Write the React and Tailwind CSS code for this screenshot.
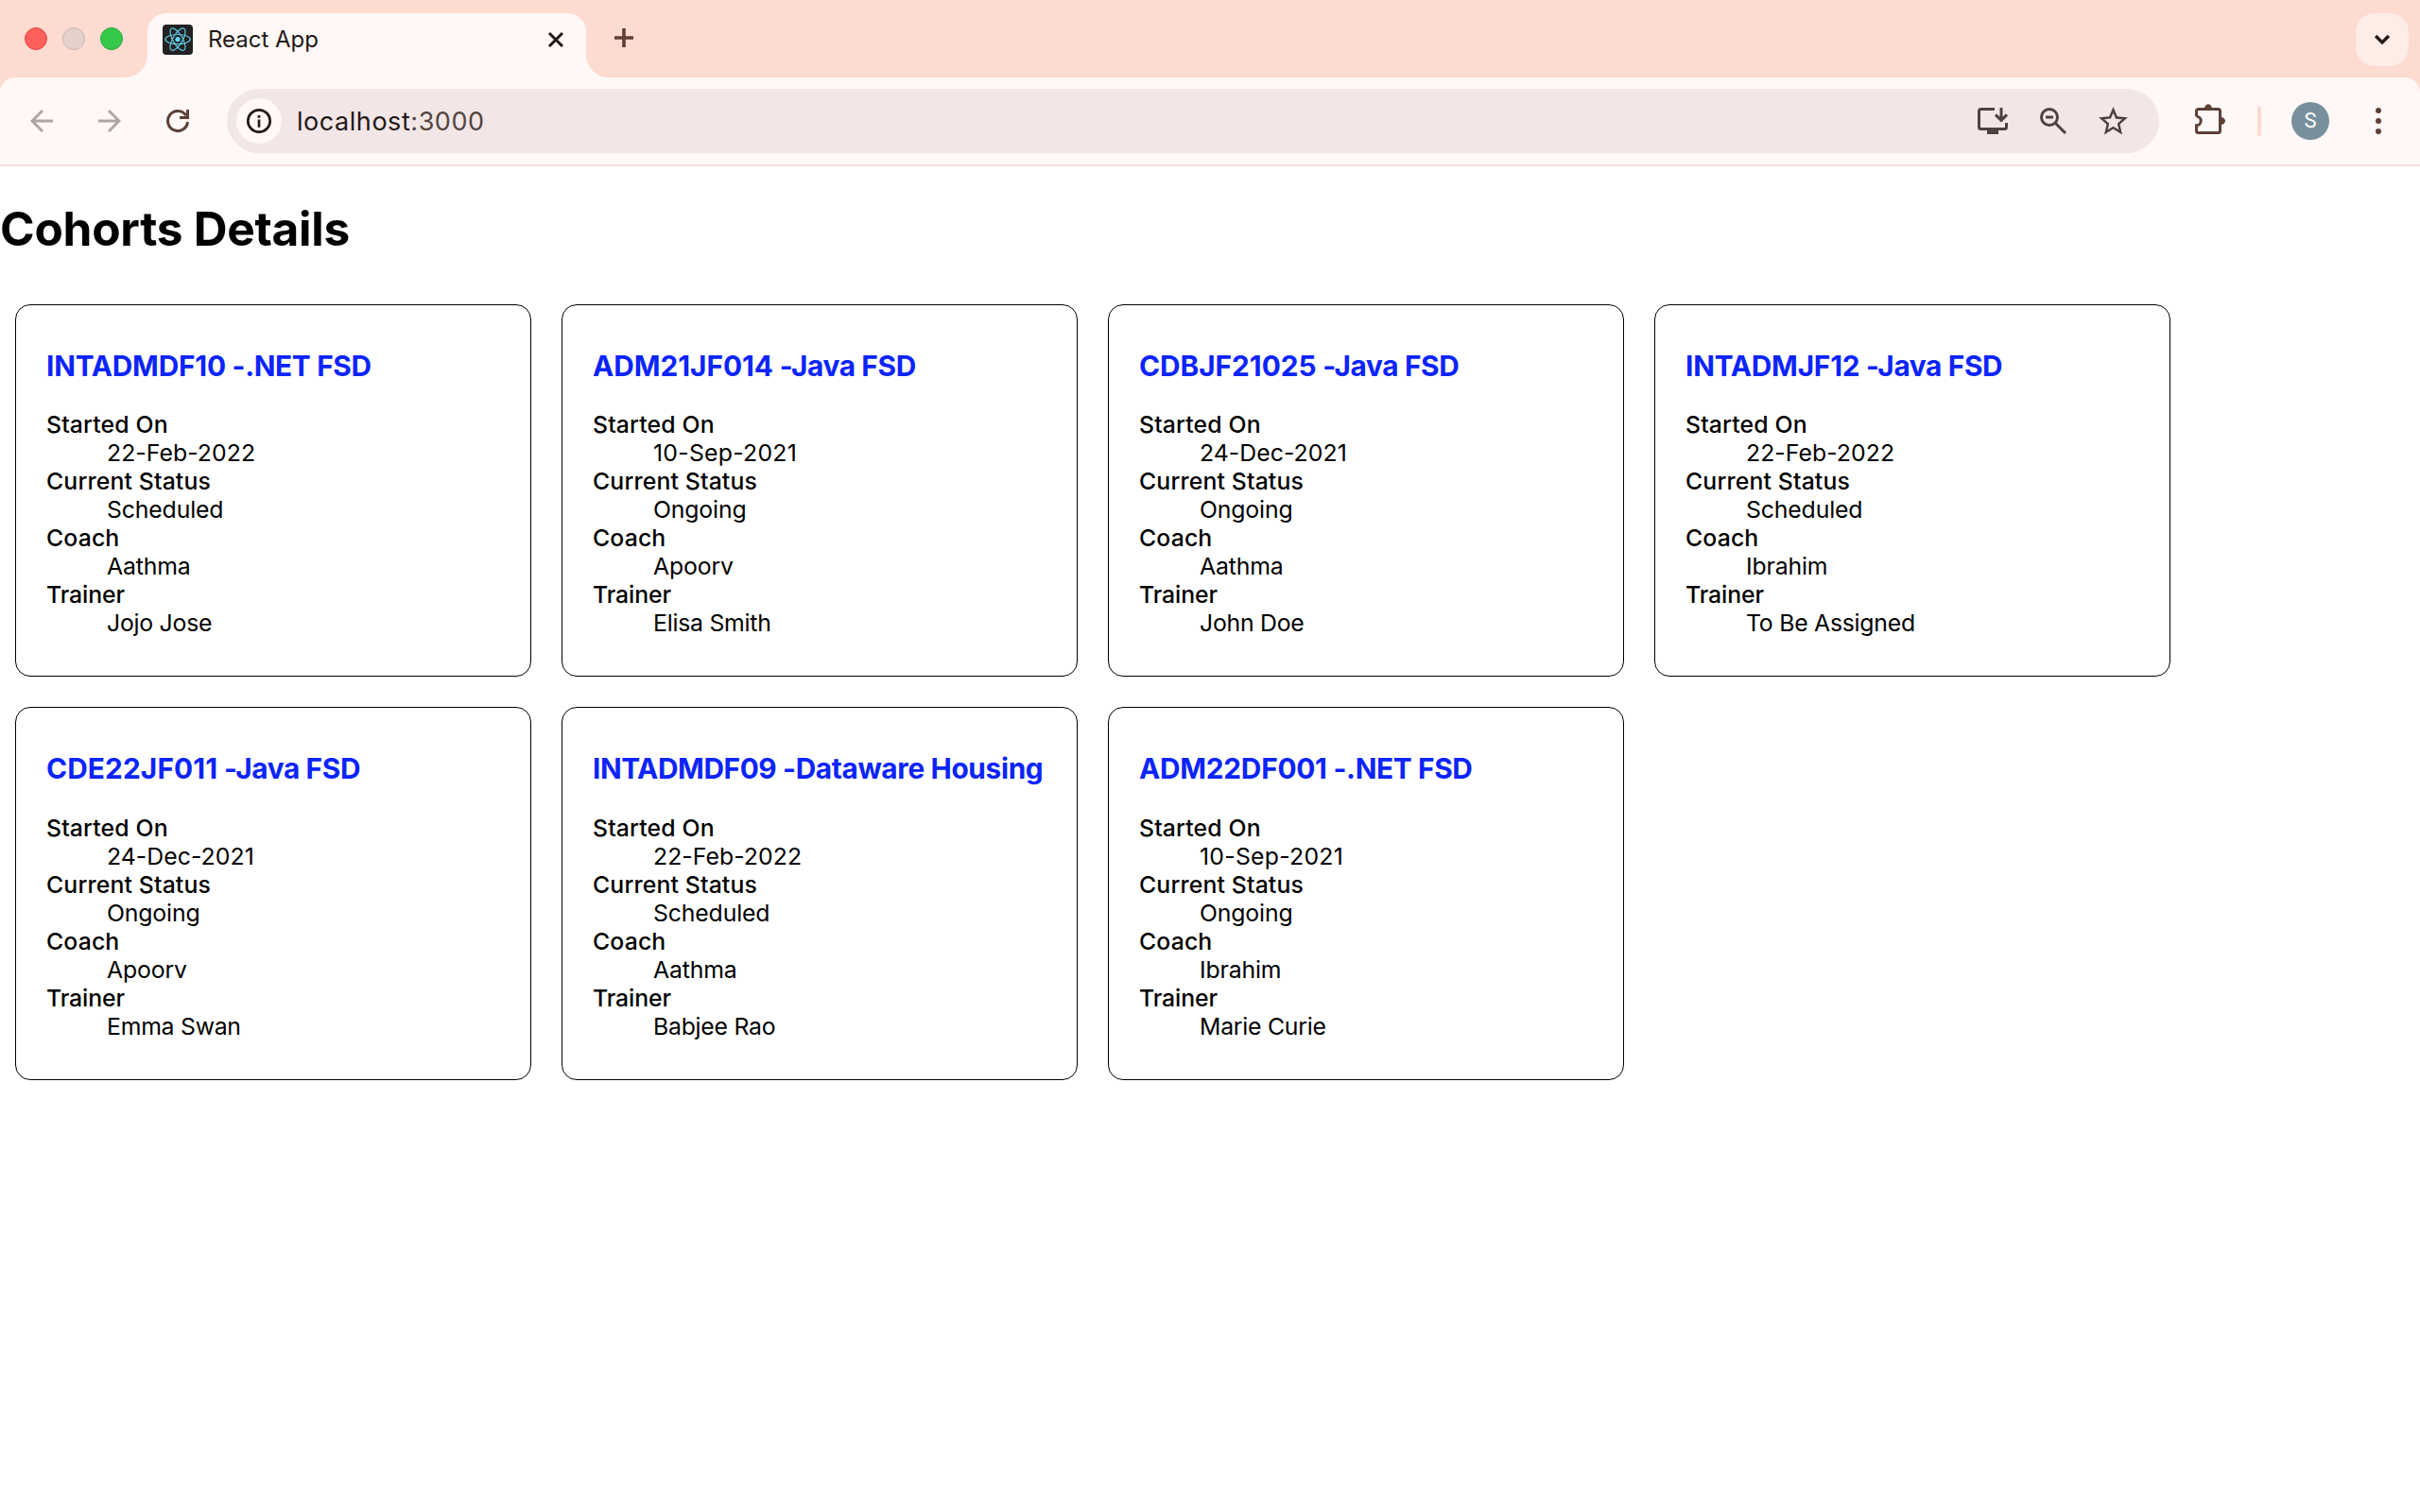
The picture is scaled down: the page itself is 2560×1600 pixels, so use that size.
import { MdStarBorder } from "react-icons/md";

const rows = [
  [
    { code: "INTADMDF10", track: ".NET FSD", started: "22-Feb-2022", status: "Scheduled", coach: "Aathma", trainer: "Jojo Jose", spacing: "tracking-[-0.2px]" },
    { code: "ADM21JF014", track: "Java FSD", started: "10-Sep-2021", status: "Ongoing", coach: "Apoorv", trainer: "Elisa Smith", spacing: "tracking-[-0.02px]" },
    { code: "CDBJF21025", track: "Java FSD", started: "24-Dec-2021", status: "Ongoing", coach: "Aathma", trainer: "John Doe", spacing: "tracking-[-0.02px]" },
    { code: "INTADMJF12", track: "Java FSD", started: "22-Feb-2022", status: "Scheduled", coach: "Ibrahim", trainer: "To Be Assigned", spacing: "tracking-[-0.2px]" },
  ],
  [
    { code: "CDE22JF011", track: "Java FSD", started: "24-Dec-2021", status: "Ongoing", coach: "Apoorv", trainer: "Emma Swan", spacing: "tracking-[0.13px]" },
    { code: "INTADMDF09", track: "Dataware Housing", started: "22-Feb-2022", status: "Scheduled", coach: "Aathma", trainer: "Babjee Rao", spacing: "tracking-[-0.4px]" },
    { code: "ADM22DF001", track: ".NET FSD", started: "10-Sep-2021", status: "Ongoing", coach: "Ibrahim", trainer: "Marie Curie", spacing: "tracking-[-0.24px]" },
  ],
];

function ReactLogo() {
  return (
    <svg className="size-8 shrink-0" viewBox="0 0 32 32">
      <rect width="32" height="32" rx="4" fill="#222222" />
      <circle cx="16" cy="15.6" r="2.6" fill="#61dafb" />
      <g fill="none" stroke="#61c8e4" strokeWidth="1.2">
        <ellipse cx="16" cy="15.6" rx="13.2" ry="5.1" />
        <ellipse cx="16" cy="15.6" rx="13.2" ry="5.1" transform="rotate(60 16 15.6)" />
        <ellipse cx="16" cy="15.6" rx="13.2" ry="5.1" transform="rotate(120 16 15.6)" />
      </g>
    </svg>
  );
}

function TabStrip() {
  return (
    <header className="flex h-[82px] items-end bg-[#fddbd0] pr-3">
      <div className="flex h-full w-[132px] shrink-0 items-center gap-4 pl-[26px]">
        <span className="size-6 shrink-0 rounded-full border border-[#e14942] bg-[#ff605c]" />
        <span className="size-6 shrink-0 rounded-full border border-[#c9b6b0] bg-[#e4d1cc]" />
        <span className="size-6 shrink-0 rounded-full border border-[#28a938] bg-[#36c84b]" />
      </div>
      <div className="size-6 bg-[#fff8f6]">
        <div className="size-6 rounded-br-[24px] bg-[#fddbd0]" />
      </div>
      <div className="flex h-[68px] w-[464px] items-start rounded-t-[20px] bg-[#fff8f6] pl-4 pr-6 pt-3">
        <ReactLogo />
        <span className="ml-4 mt-px flex-1 font-['Inter',sans-serif] text-[24px] leading-[30px] tracking-[-0.02px] text-[#231917]">
          React App
        </span>
        <svg className="mt-2 size-4 overflow-visible" viewBox="0 0 16 16" fill="none" stroke="#231917" strokeWidth="3">
          <path d="M1 1 15 15M15 1 1 15" />
        </svg>
      </div>
      <div className="size-6 bg-[#fff8f6]">
        <div className="size-6 rounded-bl-[24px] bg-[#fddbd0]" />
      </div>
      <div className="flex h-full flex-1 items-center justify-between pl-1.5 pb-0.5">
        <svg className="size-5" viewBox="0 0 20 20" fill="none" stroke="#5d4037" strokeWidth="3.6">
          <path d="M10 0V20M0 10H20" />
        </svg>
        <div className="mt-1 flex size-14 items-center justify-center rounded-[20px] bg-[#feece7]">
          <svg className="h-2.5 w-4 overflow-visible" viewBox="0 0 16 10" fill="none" stroke="#231917" strokeWidth="3.4">
            <path d="M1.1 1 8 7.9 14.9 1" />
          </svg>
        </div>
      </div>
    </header>
  );
}

function Toolbar() {
  return (
    <div className="bg-[#fddbd0]">
      <div className="flex h-[94px] items-center rounded-t-[16px] border-b-2 border-[#f5ded8] bg-[#fff8f6] pl-8 pr-[41px]">
        <svg className="size-6 shrink-0" viewBox="0 0 24 24" fill="none" stroke="#b0a5a3" strokeWidth="2.9">
          <path d="M24 12H2.4M13 1 2 12 13 23" />
        </svg>
        <svg className="ml-12 size-6 shrink-0" viewBox="0 0 24 24" fill="none" stroke="#b0a5a3" strokeWidth="2.9">
          <path d="M0 12H21.6M11 1 22 12 11 23" />
        </svg>
        <svg className="ml-12 size-6 shrink-0" viewBox="0 0 24 24" fill="none" stroke="#5d4037" strokeWidth="3">
          <path d="M22.5 13A10.5 10.5 0 1 1 20.8 6.2" />
          <path d="M22.5 0V8.5H14" />
        </svg>
        <div className="ml-10 flex h-[68px] flex-1 items-center rounded-full bg-[#f2e6e6] pl-2.5 pr-[30px] text-[#4e423f]">
          <div className="flex size-12 items-center justify-center rounded-full bg-[#fff8f6]">
            <svg className="size-7" viewBox="0 0 28 28" fill="none" stroke="#231917" strokeWidth="2.7">
              <circle cx="14" cy="14" r="11.7" />
              <path d="M14 12.6V20.8M14 8V10.8" />
            </svg>
          </div>
          <p className="ml-4 flex-1 pt-0.5 font-['Inter',sans-serif] text-[27px] leading-8 tracking-[0.55px] text-[#231917]">
            localhost<span className="text-[#53443f]">:3000</span>
          </p>
          <svg className="size-8 overflow-visible" viewBox="0 0 32 32" fill="none" stroke="currentColor" strokeWidth="3">
            <path d="M18 3.5H3.5A2 2 0 0 0 1.5 5.5V22.5A2 2 0 0 0 3.5 24.5H28.5A2 2 0 0 0 30.5 22.5V18" />
            <path d="M10 26H22V30H10Z" fill="currentColor" stroke="none" />
            <path d="M25 2V15M19 9.4 25 15.4 31 9.4" />
          </svg>
          <svg className="ml-8 size-8" viewBox="0 0 32 32" fill="none" stroke="currentColor" strokeWidth="3">
            <circle cx="12" cy="12" r="8.5" />
            <path d="M18 18 29 29M8 12H16" />
          </svg>
          <MdStarBorder className="ml-[29px] size-[37px]" />
        </div>
        <svg className="ml-[38px] h-9 w-8 shrink-0" viewBox="0 0 32 36" fill="none" stroke="#5d4037" strokeWidth="3">
          <path d="M1.5 13.3V7.5A2 2 0 0 1 3.5 5.5H24.5A2 2 0 0 1 26.5 7.5V28.5A2 2 0 0 1 24.5 30.5H3.5A2 2 0 0 1 1.5 28.5V22.7A4.7 4.7 0 0 0 1.5 13.3Z" stroke="none" />
          <path d="M1.5 13.3V7.5A2 2 0 0 1 3.5 5.5H24.5A2 2 0 0 1 26.5 7.5V28.5A2 2 0 0 1 24.5 30.5H3.5A2 2 0 0 1 1.5 28.5V22.7A4.7 4.7 0 0 0 1.5 13.3" />
          <path d="M10 5A4 4.7 0 0 1 18 5ZM27.3 14A4.7 4 0 0 1 27.3 22Z" fill="#5d4037" stroke="none" />
        </svg>
        <span className="ml-[34px] h-8 w-1 rounded-full bg-[#fddbd0]" />
        <span className="ml-8 flex size-10 items-center justify-center rounded-full bg-[#78909c] font-['Roboto',sans-serif] text-[22px] leading-none text-white">
          S
        </span>
        <svg className="ml-[49px] h-7 w-1.5" viewBox="0 0 6 28" fill="#5d4037">
          <circle cx="3" cy="3" r="3" />
          <circle cx="3" cy="14" r="3" />
          <circle cx="3" cy="25" r="3" />
        </svg>
      </div>
    </div>
  );
}

function startedSpacing(date) {
  return date.startsWith("10") ? "tracking-[0.25px]" : "tracking-[0.05px]";
}

function Term({ label, spacing = "tracking-[-0.15px]", children }) {
  return (
    <>
      <dt className={label === "Trainer" ? "font-medium tracking-[-0.1px]" : "font-medium tracking-[0.14px]"}>
        {label}
      </dt>
      <dd className={`ml-16 ${spacing}`}>{children}</dd>
    </>
  );
}

function CohortCard({ cohort, tall }) {
  return (
    <section
      className={
        tall
          ? "h-[395px] w-[546px] rounded-[16px] border border-black px-8 pt-[46px]"
          : "h-[394px] w-[546px] rounded-[16px] border border-black px-8 pt-[46px]"
      }
    >
      <h3 className="whitespace-nowrap text-[29.8px] font-bold leading-9 tracking-[-0.34px] text-[#0b24fb]">
        <span className={cohort.spacing}>{cohort.code}</span> -{cohort.track}
      </h3>
      <dl className={tall ? "mt-[30px] text-[24.8px] leading-[30px]" : "mt-[29px] text-[24.8px] leading-[30px]"}>
        <Term label="Started On" spacing={startedSpacing(cohort.started)}>{cohort.started}</Term>
        <Term label="Current Status">{cohort.status}</Term>
        <Term label="Coach">{cohort.coach}</Term>
        <Term label="Trainer" spacing="tracking-[-0.25px]">{cohort.trainer}</Term>
      </dl>
    </section>
  );
}

export default function App() {
  return (
    <div className="h-[1600px] w-[2560px] overflow-hidden bg-white">
      <TabStrip />
      <Toolbar />
      <main className="pt-9 font-['Inter',sans-serif] text-black">
        <h1 className="text-[49.6px] font-bold leading-[60px] tracking-[-0.28px]">Cohorts Details</h1>
        <div className="mt-[50px] flex flex-col gap-8 pl-4">
          {rows.map((row, i) => (
            <div key={i} className="flex gap-8">
              {row.map((cohort) => (
                <CohortCard key={cohort.code} cohort={cohort} tall={i === 1} />
              ))}
            </div>
          ))}
        </div>
      </main>
    </div>
  );
}
